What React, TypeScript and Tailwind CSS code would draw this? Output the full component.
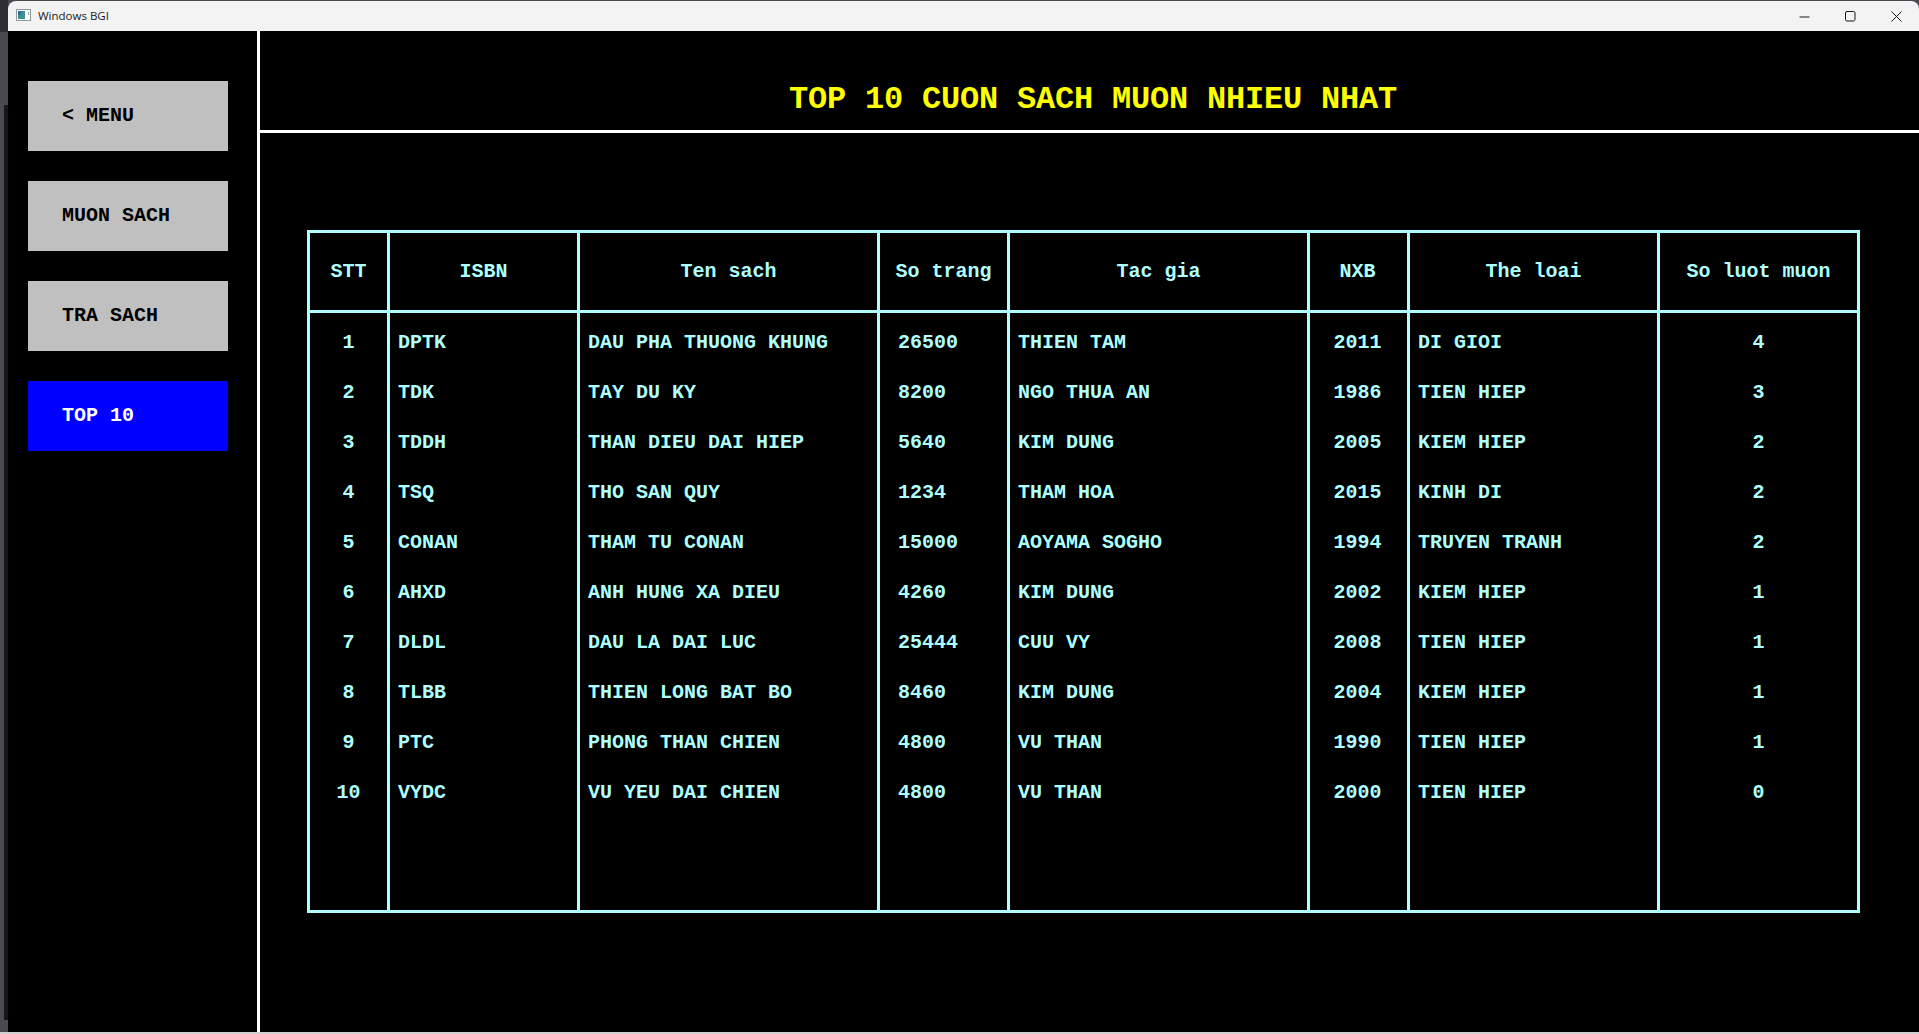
import React from 'react';

const HEADERS = ['STT', 'ISBN', 'Ten sach', 'So trang', 'Tac gia', 'NXB', 'The loai', 'So luot muon'];

const BOOKS = [
  ['1', 'DPTK', 'DAU PHA THUONG KHUNG', '26500', 'THIEN TAM', '2011', 'DI GIOI', '4'],
  ['2', 'TDK', 'TAY DU KY', '8200', 'NGO THUA AN', '1986', 'TIEN HIEP', '3'],
  ['3', 'TDDH', 'THAN DIEU DAI HIEP', '5640', 'KIM DUNG', '2005', 'KIEM HIEP', '2'],
  ['4', 'TSQ', 'THO SAN QUY', '1234', 'THAM HOA', '2015', 'KINH DI', '2'],
  ['5', 'CONAN', 'THAM TU CONAN', '15000', 'AOYAMA SOGHO', '1994', 'TRUYEN TRANH', '2'],
  ['6', 'AHXD', 'ANH HUNG XA DIEU', '4260', 'KIM DUNG', '2002', 'KIEM HIEP', '1'],
  ['7', 'DLDL', 'DAU LA DAI LUC', '25444', 'CUU VY', '2008', 'TIEN HIEP', '1'],
  ['8', 'TLBB', 'THIEN LONG BAT BO', '8460', 'KIM DUNG', '2004', 'KIEM HIEP', '1'],
  ['9', 'PTC', 'PHONG THAN CHIEN', '4800', 'VU THAN', '1990', 'TIEN HIEP', '1'],
  ['10', 'VYDC', 'VU YEU DAI CHIEN', '4800', 'VU THAN', '2000', 'TIEN HIEP', '0'],
];

// column widths, line to line
const COL_WIDTHS = ['w-[80px]', 'w-[190px]', 'w-[300px]', 'w-[130px]', 'w-[300px]', 'w-[100px]', 'w-[250px]', 'w-[200px]'];

const cellClass = (col: number) => {
  if (col === 3) return 'border-l-[3px] border-[#b0ffff] text-left pl-[18px] whitespace-nowrap';
  if (col === 5) return 'border-l-[3px] border-[#b0ffff] text-center pr-[2px] whitespace-nowrap';
  if (col === 1 || col === 2 || col === 4 || col === 6) return 'border-l-[3px] border-[#b0ffff] text-left pl-[8px] whitespace-nowrap';
  return 'border-l-[3px] border-[#b0ffff] text-center whitespace-nowrap';
};

const NAV = [
  { label: '< MENU', active: false },
  { label: 'MUON SACH', active: false },
  { label: 'TRA SACH', active: false },
  { label: 'TOP 10', active: true },
];

function TitleBar() {
  return (
    <div className="h-[30px] shrink-0 bg-[#f3f3f3] rounded-t-lg flex items-center justify-between font-normal">
      <div className="flex items-center pl-[8px] gap-[7px]">
        <svg width="15" height="14" viewBox="0 0 15 14">
          <rect x="0.5" y="0.5" width="14" height="11" fill="#fff" stroke="#8a9a9a" />
          <rect x="2" y="2" width="7" height="8" fill="#3f8f90" />
          <rect x="2" y="2" width="3" height="4" fill="#2f6fa0" />
          <rect x="12" y="3" width="1" height="3" fill="#7fb0a0" />
        </svg>
        <span className="text-[11.5px] text-[#1a1a1a] font-['Open_Sans',sans-serif]">Windows BGI</span>
      </div>
      <div className="flex items-center text-[#1a1a1a]">
        <div className="w-[46px] flex justify-center">
          <svg width="11" height="11" viewBox="0 0 11 11"><path d="M0.5 6h10" stroke="currentColor" /></svg>
        </div>
        <div className="w-[46px] flex justify-center">
          <svg width="11" height="11" viewBox="0 0 11 11"><rect x="0.5" y="0.5" width="9.5" height="9.5" rx="1.5" fill="none" stroke="currentColor" /></svg>
        </div>
        <div className="w-[46px] flex justify-center">
          <svg width="11" height="11" viewBox="0 0 11 11"><path d="M0.5 0.5l10 10M10.5 0.5l-10 10" stroke="currentColor" /></svg>
        </div>
      </div>
    </div>
  );
}

function Sidebar() {
  return (
    <aside className="w-[252px] shrink-0 border-r-[3px] border-white pt-[50px] pl-[20px] flex flex-col gap-[30px]">
      {NAV.map((item) => (
        <div
          key={item.label}
          className={
            item.active
              ? 'w-[200px] h-[70px] pl-[34px] flex items-center bg-[#0000ff] text-white whitespace-pre'
              : 'w-[200px] h-[70px] pl-[34px] flex items-center bg-[#c0c0c0] text-black whitespace-pre'
          }
        >
          {item.label}
        </div>
      ))}
    </aside>
  );
}

function TopTable() {
  return (
    <table className="table-fixed border-separate border-spacing-0 w-[1553px] border-t-[3px] border-r-[3px] border-b-[3px] border-[#b0ffff] text-[#b0ffff]">
      <colgroup>
        {COL_WIDTHS.map((w, i) => (
          <col key={i} className={w} />
        ))}
      </colgroup>
      <thead>
        <tr className="h-[80px]">
          {HEADERS.map((h, i) => (
            <th
              key={h}
              className={
                i === 5
                  ? 'border-l-[3px] border-b-[3px] border-[#b0ffff] text-center pr-[2px] font-bold'
                  : 'border-l-[3px] border-b-[3px] border-[#b0ffff] text-center font-bold'
              }
            >
              {h}
            </th>
          ))}
        </tr>
      </thead>
      <tbody>
        <tr className="h-[5px]">
          {HEADERS.map((h) => (
            <td key={h} className="border-l-[3px] border-[#b0ffff]" />
          ))}
        </tr>
        {BOOKS.map((row) => (
          <tr key={row[0]} className="h-[50px]">
            {row.map((cell, i) => (
              <td key={i} className={cellClass(i)}>
                {cell}
              </td>
            ))}
          </tr>
        ))}
        <tr className="h-[92px]">
          {HEADERS.map((h) => (
            <td key={h} className="border-l-[3px] border-[#b0ffff]" />
          ))}
        </tr>
      </tbody>
    </table>
  );
}

export default function App() {
  return (
    <div className="relative h-screen w-full overflow-hidden bg-[#4a4b50] font-['Liberation_Mono',monospace] font-bold text-[20px] leading-none flex flex-col">
      {/* desktop showing around the window edge */}
      <div className="absolute left-0 top-0 w-2 h-[32px] bg-[#2e2f33]" />
      <div className="absolute left-[4px] top-[105px] bottom-[14px] w-1 bg-[#14171c]" />

      <div className="relative flex-1 min-h-0 pt-px pl-2 flex flex-col">
        <TitleBar />
        <div className="flex-1 min-h-0 flex bg-black">
          <Sidebar />
          <main className="flex-1 min-w-0">
            <header className="h-[102px] border-b-[3px] border-white flex items-center justify-center pl-[7px] pt-[38px] text-[32px] tracking-[-0.2px] text-[#ffff00] whitespace-pre">
              TOP 10 CUON SACH MUON NHIEU NHAT
            </header>
            <div className="pt-[97px] pl-[47px]">
              <TopTable />
            </div>
          </main>
        </div>
      </div>
      <div className="relative h-[2px] shrink-0 bg-[#d0d0d0]" />
    </div>
  );
}
